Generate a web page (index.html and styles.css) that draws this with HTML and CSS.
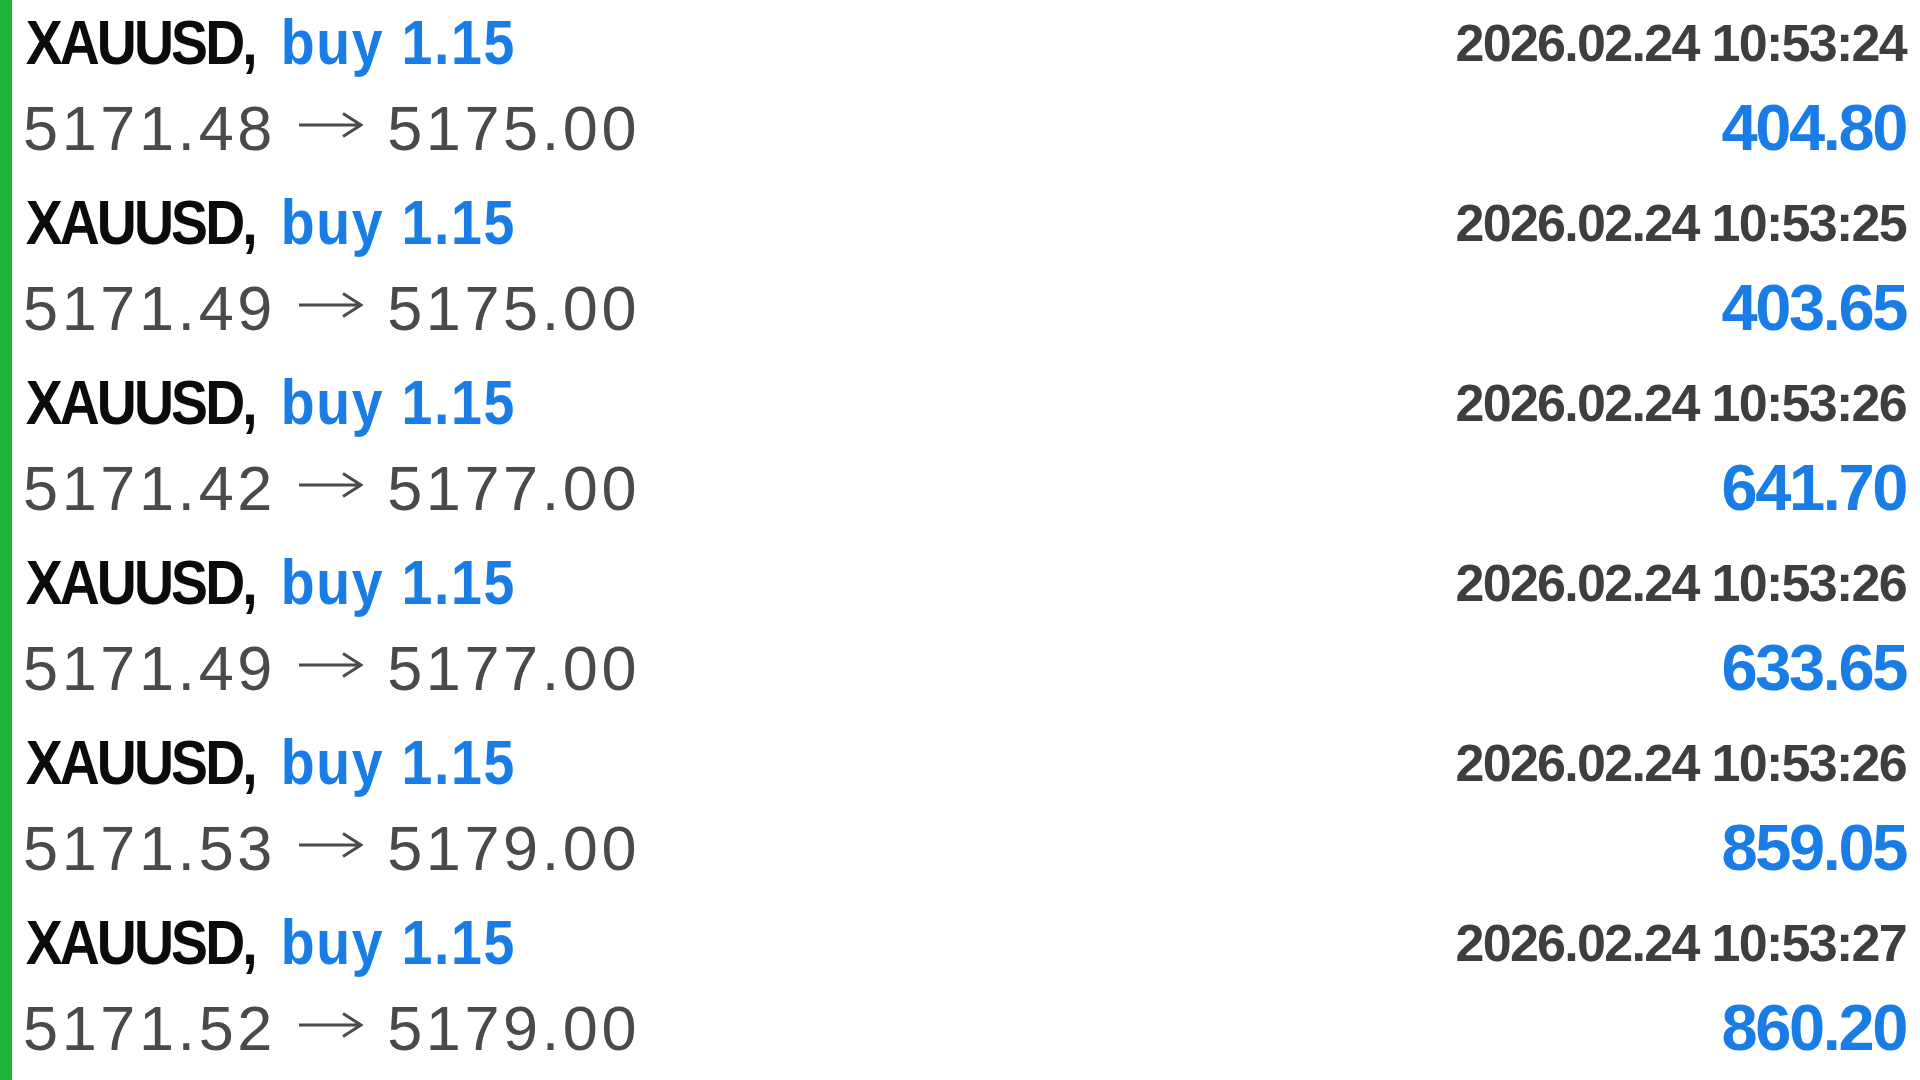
FILE: index.html
```html
<!DOCTYPE html>
<html lang="en">

<head>
    <meta charset="UTF-8">
    <meta name="viewport" content="width=device-width, initial-scale=1.0">
    <title>History</title>
    <link rel="stylesheet" href="styles.css">
</head>

<body>

    <div class="deals">
        <div class="deal">
            <div class="deal-head">
                <span class="title"><span class="symbol">XAUUSD,</span> <span class="side">buy 1.15</span></span>
                <span class="time">2026.02.24 10:53:24</span>
            </div>
            <div class="deal-body">
                <span class="prices">5171.48 <svg class="arrow" viewBox="0 0 64 26" aria-hidden="true"><path d="M0 13H62M44 1.5L62 13L44 24.5"/></svg> 5175.00</span>
                <span class="profit">404.80</span>
            </div>
        </div>

        <div class="deal">
            <div class="deal-head">
                <span class="title"><span class="symbol">XAUUSD,</span> <span class="side">buy 1.15</span></span>
                <span class="time">2026.02.24 10:53:25</span>
            </div>
            <div class="deal-body">
                <span class="prices">5171.49 <svg class="arrow" viewBox="0 0 64 26" aria-hidden="true"><path d="M0 13H62M44 1.5L62 13L44 24.5"/></svg> 5175.00</span>
                <span class="profit">403.65</span>
            </div>
        </div>

        <div class="deal">
            <div class="deal-head">
                <span class="title"><span class="symbol">XAUUSD,</span> <span class="side">buy 1.15</span></span>
                <span class="time">2026.02.24 10:53:26</span>
            </div>
            <div class="deal-body">
                <span class="prices">5171.42 <svg class="arrow" viewBox="0 0 64 26" aria-hidden="true"><path d="M0 13H62M44 1.5L62 13L44 24.5"/></svg> 5177.00</span>
                <span class="profit">641.70</span>
            </div>
        </div>

        <div class="deal">
            <div class="deal-head">
                <span class="title"><span class="symbol">XAUUSD,</span> <span class="side">buy 1.15</span></span>
                <span class="time">2026.02.24 10:53:26</span>
            </div>
            <div class="deal-body">
                <span class="prices">5171.49 <svg class="arrow" viewBox="0 0 64 26" aria-hidden="true"><path d="M0 13H62M44 1.5L62 13L44 24.5"/></svg> 5177.00</span>
                <span class="profit">633.65</span>
            </div>
        </div>

        <div class="deal">
            <div class="deal-head">
                <span class="title"><span class="symbol">XAUUSD,</span> <span class="side">buy 1.15</span></span>
                <span class="time">2026.02.24 10:53:26</span>
            </div>
            <div class="deal-body">
                <span class="prices">5171.53 <svg class="arrow" viewBox="0 0 64 26" aria-hidden="true"><path d="M0 13H62M44 1.5L62 13L44 24.5"/></svg> 5179.00</span>
                <span class="profit">859.05</span>
            </div>
        </div>

        <div class="deal">
            <div class="deal-head">
                <span class="title"><span class="symbol">XAUUSD,</span> <span class="side">buy 1.15</span></span>
                <span class="time">2026.02.24 10:53:27</span>
            </div>
            <div class="deal-body">
                <span class="prices">5171.52 <svg class="arrow" viewBox="0 0 64 26" aria-hidden="true"><path d="M0 13H62M44 1.5L62 13L44 24.5"/></svg> 5179.00</span>
                <span class="profit">860.20</span>
            </div>
        </div>
    </div>

</body>

</html>
```

FILE: styles.css
```css
body {
    margin: 0;
    padding: 0;
    background-color: #fff;
    font-family: 'Liberation Sans', Arial, sans-serif;
}

.deals {
    height: 1080px;
    border-left: 12px solid #1fb53a;
    box-sizing: border-box;
    overflow: hidden;
}

.deal {
    height: 180px;
    padding: 0 14px 0 11px;
    box-sizing: border-box;
}

.deal-head, .deal-body {
    display: flex;
    justify-content: space-between;
    align-items: baseline;
}

.deal-head {
    height: 84px;
    line-height: 84px;
}

.deal-body {
    height: 88px;
    line-height: 88px;
}

/* bold title is drawn condensed in the app */
.title {
    display: inline-block;
    font-size: 63px;
    font-weight: bold;
    padding-left: 3px;
    transform: scaleX(0.88);
    transform-origin: left center;
    white-space: nowrap;
}

.symbol {
    color: #0b0b0b;
    letter-spacing: -3.3px;
}

.side {
    color: #1a7de6;
    margin-left: 12px;
    letter-spacing: 1.9px;
}

.time {
    font-size: 52px;
    font-weight: bold;
    color: #3e3e41;
    letter-spacing: -1.7px;
    position: relative;
    top: -3px;
}

.prices {
    font-size: 63px;
    color: #4a4a4c;
    letter-spacing: 3.6px;
    white-space: nowrap;
}

.arrow {
    width: 64px;
    height: 26px;
    margin: 0 3px 0 2px;
    vertical-align: 12px;
    fill: none;
    stroke: #4a4a4c;
    stroke-width: 3;
}

.profit {
    font-size: 65px;
    font-weight: bold;
    color: #1a7de6;
    letter-spacing: -2.4px;
}
```
